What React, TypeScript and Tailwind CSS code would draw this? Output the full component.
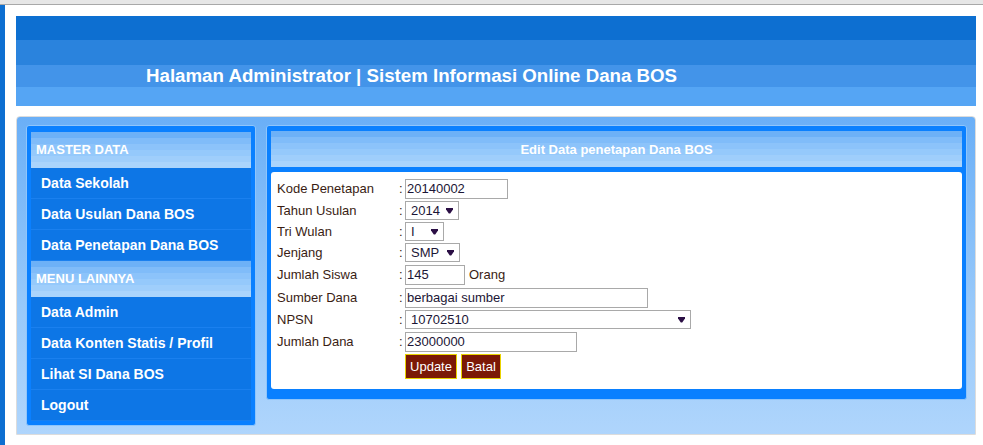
import React from 'react';

const masterMenu = ['Data Sekolah', 'Data Usulan Dana BOS', 'Data Penetapan Dana BOS'];
const otherMenu = ['Data Admin', 'Data Konten Statis / Profil', 'Lihat SI Dana BOS', 'Logout'];

function MenuHeader({ title }: { title: string }) {
  return (
    <div className="h-[36px] flex items-center pl-[5px] bg-[linear-gradient(to_bottom,#6db1f7_0px,#6db1f7_6px,#80bcf9_6px,#80bcf9_12px,#8cc3fa_12px,#8cc3fa_18px,#95c9fb_18px,#95c9fb_24px,#9fcefb_24px,#9fcefb_30px,#aad4fc_30px)]">
      <span className="text-[13px] font-bold text-white">{title}</span>
    </div>
  );
}

function MenuItem({ label }: { label: string }) {
  return (
    <a
      href="#"
      className="h-[31px] flex items-center pl-[10px] pt-[1px] bg-[#0d76e6] border-b border-[#1a80ef] text-[14px] font-bold text-white"
    >
      {label}
    </a>
  );
}

function Arrow() {
  return (
    <svg width="7" height="6" viewBox="0 0 7 6" className="absolute right-[6px] top-1/2 -translate-y-1/2 pointer-events-none">
      <path d="M0 0H7V1.5L4.2 5.5H2.8L0 1.5Z" fill="#2b0f45" />
    </svg>
  );
}

function SelectBox({ value, width, options }: { value: string; width: string; options: string[] }) {
  return (
    <div className={`relative h-[19px] ${width}`}>
      <select
        defaultValue={value}
        className="appearance-none w-full h-full border border-[#a9a9a9] bg-white pl-[5px] text-[13px] leading-none text-[#1c1636] outline-none"
      >
        {options.map((o) => (
          <option key={o}>{o}</option>
        ))}
      </select>
      <Arrow />
    </div>
  );
}

function TextBox({ value, width }: { value: string; width: string }) {
  return (
    <input
      defaultValue={value}
      className={`h-[20px] ${width} border border-[#a9a9a9] bg-white pl-[1px] text-[13px] text-[#1c1636] outline-none`}
    />
  );
}

function Row({ label, h, children }: { label?: string; h: string; children: React.ReactNode }) {
  return (
    <div className={`flex items-center ${h}`}>
      <div className="w-[122px] shrink-0">{label}</div>
      <div className="w-[6px] shrink-0">{label ? ':' : ''}</div>
      <div className="flex items-center gap-[4px]">{children}</div>
    </div>
  );
}

export default function App() {
  return (
    <div className="w-full h-[445px] bg-white overflow-hidden font-['Liberation_Sans',Arial,sans-serif]">
      <div className="h-[4px] bg-[#e6e6e6] border-b border-[#a8a8a8] box-content" />
      <div className="flex h-[440px]">
        <div className="w-[5px] shrink-0 bg-[#0d6fd1]" />
        <div className="pl-[11px] pt-[11px]">
          {/* Header */}
          <div className="w-[960px] h-[90px] pl-[130px] pt-[50px] bg-[linear-gradient(to_bottom,#0d6fd1_0px,#0d6fd1_24px,#2a83dd_24px,#2a83dd_49px,#4394e9_49px,#4394e9_71px,#55a5f4_71px)]">
            <h1 className="text-[18.7px] leading-[20px] font-bold text-white">
              Halaman Administrator | Sistem Informasi Online Dana BOS
            </h1>
          </div>

          {/* Main */}
          <div className="mt-[10px] w-[960px] h-[319px] flex items-start gap-[10px] pl-[9px] pt-[8px] border border-[#dcdcdc] rounded-t-[4px] bg-[linear-gradient(to_bottom,#6aaff7,#98c9fa_60%,#afd5fc)]">
            {/* Sidebar */}
            <div className="w-[230px] border border-[#8fc5fb] rounded-[3px] bg-[#0a80ff] px-[4px] pt-[6px] pb-[4px]">
              <MenuHeader title="MASTER DATA" />
              {masterMenu.map((m) => (
                <MenuItem key={m} label={m} />
              ))}
              <MenuHeader title="MENU LAINNYA" />
              {otherMenu.map((m) => (
                <MenuItem key={m} label={m} />
              ))}
            </div>

            {/* Content */}
            <div className="w-[701px] border border-[#8fc5fb] rounded-[3px] bg-[#0a80ff] px-[4px] pt-[5px] pb-[10px]">
              <div className="h-[36px] flex items-center justify-center pt-[1px] bg-[linear-gradient(to_bottom,#6db1f7_0px,#6db1f7_6px,#80bcf9_6px,#80bcf9_12px,#8cc3fa_12px,#8cc3fa_18px,#95c9fb_18px,#95c9fb_24px,#9fcefb_24px,#9fcefb_30px,#aad4fc_30px)]">
                <span className="text-[13px] font-bold text-white">Edit Data penetapan Dana BOS</span>
              </div>
              <div className="mt-[5px] bg-white rounded-[3px] pl-[6px] pt-[5px] pb-[9px] text-[13px] text-[#3a1d14]">
                <Row label="Kode Penetapan" h="h-[23px]">
                  <TextBox value="20140002" width="w-[103px]" />
                </Row>
                <Row label="Tahun Usulan" h="h-[21px]">
                  <SelectBox value="2014" width="w-[54px]" options={['2013', '2014', '2015']} />
                </Row>
                <Row label="Tri Wulan" h="h-[21px]">
                  <SelectBox value="I" width="w-[39px]" options={['I', 'II', 'III', 'IV']} />
                </Row>
                <Row label="Jenjang" h="h-[21px]">
                  <SelectBox value="SMP" width="w-[55px]" options={['SD', 'SMP', 'SMA']} />
                </Row>
                <Row label="Jumlah Siswa" h="h-[23px]">
                  <TextBox value="145" width="w-[60px]" />
                  <span>Orang</span>
                </Row>
                <Row label="Sumber Dana" h="h-[23px]">
                  <TextBox value="berbagai sumber" width="w-[243px]" />
                </Row>
                <Row label="NPSN" h="h-[21px]">
                  <SelectBox value=" 10702510" width="w-[286px]" options={[' 10702510']} />
                </Row>
                <Row label="Jumlah Dana" h="h-[23px]">
                  <TextBox value="23000000" width="w-[172px]" />
                </Row>
                <Row h="h-[27px]">
                  <button className="h-[25px] w-[52px] bg-[#7b1906] border border-[#e9d300] text-white text-[13px]">
                    Update
                  </button>
                  <button className="h-[25px] w-[40px] bg-[#7b1906] border border-[#e9d300] text-white text-[13px]">
                    Batal
                  </button>
                </Row>
              </div>
            </div>
          </div>
        </div>
      </div>
    </div>
  );
}
